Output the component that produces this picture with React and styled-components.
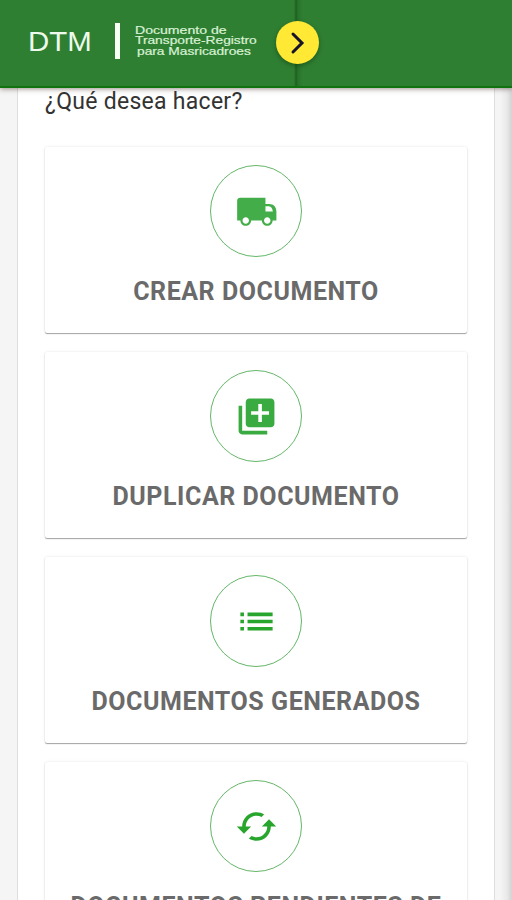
import React from "react";
import styled, { createGlobalStyle } from "styled-components";

const GlobalStyle = createGlobalStyle`
  * { box-sizing: border-box; }
  html, body { margin: 0; height: 900px; overflow: hidden; background: #f5f5f5; }
`;

const Screen = styled.div`
  width: 512px;
  height: 900px;
  overflow: hidden;
  display: flex;
  flex-direction: column;
  background: linear-gradient(90deg, #f5f5f5 0 500px, #e9e9e9 507px, #d2d2d2 512px);
  font-family: Roboto, "Liberation Sans", sans-serif;
`;

const Header = styled.header`
  position: relative;
  z-index: 2;
  flex: none;
  display: flex;
  align-items: center;
  height: 88px;
  padding: 0 0 5px 28px;
  background: linear-gradient(90deg, transparent 294px, rgba(0, 45, 0, 0.38) 296px, rgba(0, 45, 0, 0.14) 298px, transparent 303px), #2f7f33;
  border-bottom: 2px solid #10730f;
  box-shadow: 0 1px 5px rgba(60, 30, 30, 0.5);
  color: #eefaeb;
  font-family: "Liberation Sans", Arial, sans-serif;
`;

const Brand = styled.div`
  width: 87px;
  padding-top: 2px;
  font-size: 27px;
  line-height: 30px;
  span {
    display: inline-block;
    transform: scaleX(1.09);
    transform-origin: left;
  }
`;

const Divider = styled.div`
  width: 5px;
  height: 36px;
  margin-top: 1px;
  background: #f8fff5;
`;

const Tagline = styled.div`
  display: flex;
  flex-direction: column;
  width: 156px;
  padding-left: 15px;
  font-size: 11px;
  line-height: 10.3px;
  color: #d9f2d5;
  -webkit-text-stroke: 0.2px #d9f2d5;
`;

const TagLineText = styled.span`
  width: max-content;
  margin-left: ${({ $indent }) => $indent}px;
  transform: scaleX(${({ $stretch }) => $stretch});
  transform-origin: left;
`;

const NextButton = styled.button`
  display: grid;
  place-items: center;
  width: 43px;
  height: 43px;
  margin-top: 3px;
  padding: 0;
  border: 0;
  border-radius: 50%;
  background: #ffe934;
  color: #17132b;
  box-shadow: 0 2px 5px rgba(0, 40, 0, 0.4);
`;

const Panel = styled.main`
  flex: 1;
  width: 478px;
  margin-left: 17px;
  padding: 0 27px;
  background: #fff;
  border: solid #dedede;
  border-width: 0 1px;
`;

const Question = styled.h1`
  height: 59px;
  margin: 0;
  font-size: 23px;
  font-weight: 400;
  line-height: 27px;
  letter-spacing: 0.28px;
  color: #333;
  white-space: nowrap;
`;

const CardList = styled.div`
  display: flex;
  flex-direction: column;
  gap: 19px;
`;

const Card = styled.button`
  display: flex;
  flex-direction: column;
  align-items: center;
  flex: none;
  width: 422px;
  height: 186px;
  padding: 18px 0 0;
  border: 0;
  border-radius: 2px;
  background: #fff;
  box-shadow: 0 1px 1px rgba(0, 0, 0, 0.34), 0 0 3px rgba(0, 0, 0, 0.1);
  font-family: inherit;
`;

const IconCircle = styled.div`
  display: grid;
  place-items: center;
  width: 92px;
  height: 92px;
  border: 1px solid #65b669;
  border-radius: 50%;
  color: ${({ $color }) => $color};
`;

const Label = styled.span`
  margin-top: 20px;
  font-size: 25px;
  font-weight: 700;
  line-height: 30px;
  letter-spacing: 0.55px;
  color: #6a6a6a;
  white-space: nowrap;
`;

const actions = [
  {
    label: "CREAR DOCUMENTO",
    color: "#43ae49",
    icon: "M17 7.8V4.3H2.9C1.9 4.3 1.2 5 1.2 6v11H3c0 1.66 1.34 3 3 3s3-1.34 3-3h6c0 1.66 1.34 3 3 3s3-1.34 3-3h2.1v-5c0-2.5-1.5-4.2-4-4.2H17zM6 18.8c-1 0-1.8-.8-1.8-1.8s.8-1.8 1.8-1.8 1.8.8 1.8 1.8-.8 1.8-1.8 1.8zM17 9h1.9c1.2 0 2.1 1.2 2.2 3H17V9zm1 9.8c-1 0-1.8-.8-1.8-1.8s.8-1.8 1.8-1.8 1.8.8 1.8 1.8-.8 1.8-1.8 1.8z",
  },
  {
    label: "DUPLICAR DOCUMENTO",
    color: "#3aab40",
    icon: "M4 6H2v14c0 1.1.9 2 2 2h14v-2H4V6zm16-4H8c-1.1 0-2 .9-2 2v12c0 1.1.9 2 2 2h12c1.1 0 2-.9 2-2V4c0-1.1-.9-2-2-2zm-1 9h-4v4h-2v-4H9V9h4V5h2v4h4v2z",
  },
  {
    label: "DOCUMENTOS GENERADOS",
    color: "#27a52d",
    icon: "M3 13h2v-2H3v2zm0 4h2v-2H3v2zm0-8h2V7H3v2zm4 4h14v-2H7v2zm0 4h14v-2H7v2zM7 7v2h14V7H7z",
  },
  {
    label: "DOCUMENTOS PENDIENTES DE",
    color: "#28a52d",
    icon: "M19 8l-4 4h3c0 3.31-2.69 6-6 6-1.01 0-1.97-.25-2.8-.7l-1.46 1.46C8.97 19.54 10.43 20 12 20c4.42 0 8-3.58 8-8h3l-4-4zM6 12c0-3.31 2.69-6 6-6 1.01 0 1.97.25 2.8.7l1.46-1.46C15.03 4.46 13.57 4 12 4c-4.42 0-8 3.58-8 8H1l4 4 4-4H6z",
  },
];

export default function App() {
  return (
    <Screen>
      <GlobalStyle />
      <Header>
        <Brand><span>DTM</span></Brand>
        <Divider />
        <Tagline>
          <TagLineText $indent={0} $stretch={1.28}>Documento de</TagLineText>
          <TagLineText $indent={0} $stretch={1.25}>Transporte-Registro</TagLineText>
          <TagLineText $indent={2} $stretch={1.25}>para Masricadroes</TagLineText>
        </Tagline>
        <NextButton aria-label="Siguiente">
          <svg width="43" height="43" viewBox="0 0 43 43" fill="none" stroke="currentColor" strokeWidth="3">
            <path d="M17 13l9 9-9 9" strokeLinecap="round" />
          </svg>
        </NextButton>
      </Header>
      <Panel>
        <Question>¿Qué desea hacer?</Question>
        <CardList>
          {actions.map(({ label, color, icon }) => (
            <Card key={label}>
              <IconCircle $color={color}>
                <svg width="43" height="43" viewBox="0 0 24 24" fill="currentColor">
                  <path d={icon} />
                </svg>
              </IconCircle>
              <Label>{label}</Label>
            </Card>
          ))}
        </CardList>
      </Panel>
    </Screen>
  );
}
